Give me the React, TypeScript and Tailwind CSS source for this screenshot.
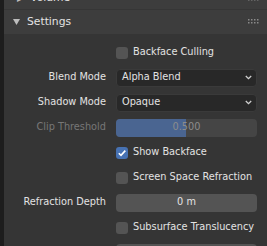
import React from "react";

const font = { fontFamily: '"DejaVu Sans", sans-serif' };

function Dots() {
  const dots = [];
  for (let r = 0; r < 2; r++)
    for (let c = 0; c < 4; c++)
      dots.push(<rect key={`${r}-${c}`} x={c * 3} y={r * 3} width={1.5} height={1.5} fill="#8a8a8a" />);
  return (
    <svg width="12" height="6" viewBox="0 0 12 6">
      {dots}
    </svg>
  );
}

function Chevron() {
  return (
    <svg width="7" height="5" viewBox="0 0 7 5">
      <path d="M0.8 1 L3.5 3.7 L6.2 1" stroke="#d0d0d0" strokeWidth="1.3" fill="none" />
    </svg>
  );
}

function Label({ children, dim }: { children: React.ReactNode; dim?: boolean }) {
  return (
    <div className={`w-[102px] shrink-0 text-right ${dim ? "text-[#777777]" : "text-[#e3e3e3]"}`}>{children}</div>
  );
}

function Dropdown({ value }: { value: string }) {
  return (
    <div className="ml-[10px] flex h-[18px] w-[141px] items-center justify-between rounded-[4px] border border-[#3a3a3a] bg-[#282828] pl-[5px] pr-[4px] text-[#e3e3e3]">
      <span>{value}</span>
      <Chevron />
    </div>
  );
}

function Checkbox({ label, checked }: { label: string; checked?: boolean }) {
  return (
    <div className="flex h-[25px] items-center">
      <div className="w-[112px] shrink-0" />
      <div
        className={`flex h-[12px] w-[12px] items-center justify-center rounded-[3px] ${
          checked ? "bg-[#4772b3]" : "bg-[#545454]"
        }`}
      >
        {checked && (
          <svg width="10" height="10" viewBox="0 0 10 10">
            <path d="M1.8 5.2 L4 7.4 L8.3 2.6" stroke="#ffffff" strokeWidth="1.6" fill="none" />
          </svg>
        )}
      </div>
      <span className="ml-[5px] text-[#e3e3e3]">{label}</span>
    </div>
  );
}

export default function App() {
  return (
    <div className="h-[246px] w-[267px] overflow-hidden bg-[#1d1d1d] text-[9.75px]" style={font}>
      <div className="ml-[4px] flex flex-col">
        <div className="-mt-[12px] flex h-[21px] items-center justify-between bg-[#3d3d3d] pl-[13px] pr-[7px]">
          <div className="flex items-center">
            <span className="text-[8px] text-[#bdbdbd]">▶</span>
            <span className="ml-[7px] text-[10.75px] text-[#e3e3e3]">Volume</span>
          </div>
          <Dots />
        </div>
        <div className="h-[1px] bg-[#363636]" />
        <div className="flex h-[24px] items-center justify-between bg-[#3d3d3d] pl-[9px] pr-[7px]">
          <div className="flex items-center">
            <svg width="7" height="6" viewBox="0 0 7 6">
              <path d="M0 0 L7 0 L3.5 6 Z" fill="#bdbdbd" />
            </svg>
            <span className="ml-[7px] text-[10.75px] text-[#e3e3e3]">Settings</span>
          </div>
          <Dots />
        </div>
        <div className="flex flex-col bg-[#353535] pt-[6px]">
          <Checkbox label="Backface Culling" />
          <div className="flex h-[25px] items-center">
            <Label>Blend Mode</Label>
            <Dropdown value="Alpha Blend" />
          </div>
          <div className="flex h-[25px] items-center">
            <Label>Shadow Mode</Label>
            <Dropdown value="Opaque" />
          </div>
          <div className="flex h-[25px] items-center">
            <Label dim>Clip Threshold</Label>
            <div className="relative ml-[10px] flex h-[18px] w-[141px] items-center justify-center overflow-hidden rounded-[4px] bg-[#454545] text-[#8c8c8c]">
              <div className="absolute left-0 top-0 h-full w-[70px] bg-[#4a6591]" />
              <span className="relative">0.500</span>
            </div>
          </div>
          <Checkbox label="Show Backface" checked />
          <Checkbox label="Screen Space Refraction" />
          <div className="flex h-[25px] items-center">
            <Label>Refraction Depth</Label>
            <div className="ml-[10px] flex h-[18px] w-[141px] items-center justify-center rounded-[4px] bg-[#545454] text-[#e3e3e3]">
              0 m
            </div>
          </div>
          <Checkbox label="Subsurface Translucency" />
          <div className="flex h-[25px] items-center">
            <div className="w-[102px] shrink-0" />
            <div className="ml-[10px] h-[18px] w-[141px] rounded-[4px] bg-[#545454]" />
          </div>
        </div>
      </div>
    </div>
  );
}
